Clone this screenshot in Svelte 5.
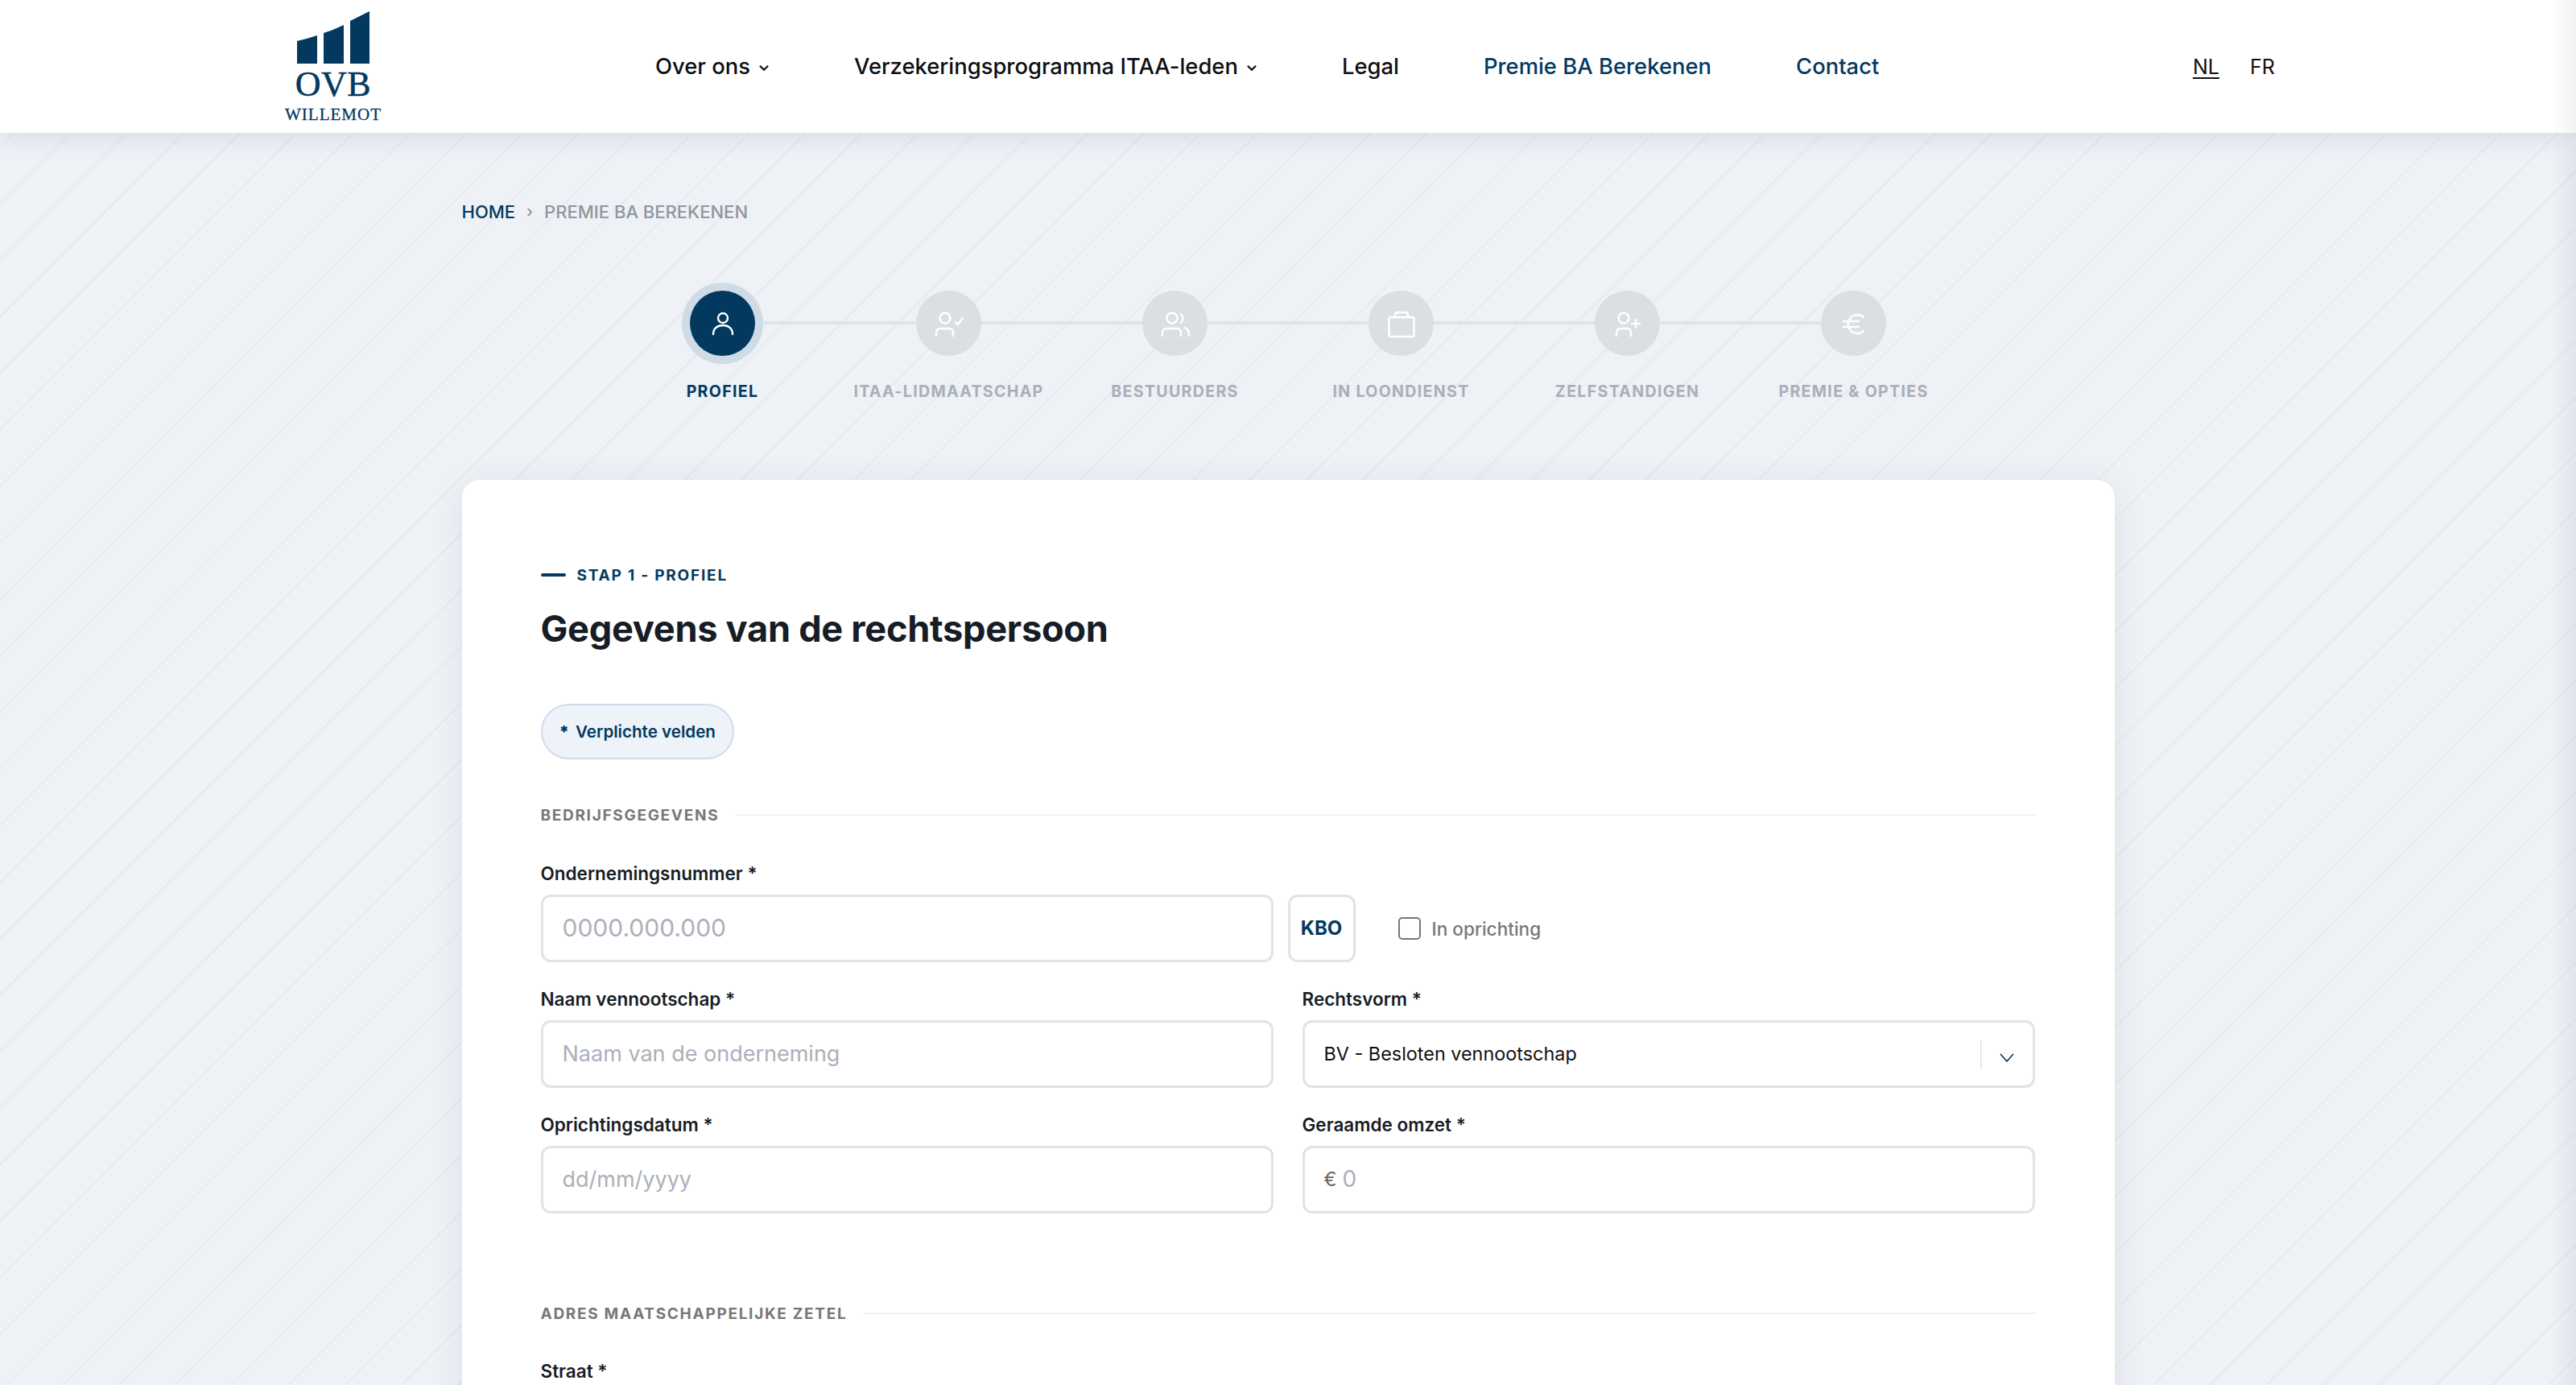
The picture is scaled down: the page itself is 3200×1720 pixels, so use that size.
<script lang="ts">
  const nav = [
    { label: 'Over ons', caret: true },
    { label: 'Verzekeringsprogramma ITAA-leden', caret: true },
    { label: 'Legal' },
    { label: 'Premie BA Berekenen', accent: true },
    { label: 'Contact', accent: true }
  ];
  const steps = [
    { key: 'user', label: 'Profiel' },
    { key: 'check', label: 'ITAA-lidmaatschap' },
    { key: 'users', label: 'Bestuurders' },
    { key: 'case', label: 'In loondienst' },
    { key: 'plus', label: 'Zelfstandigen' },
    { key: 'euro', label: 'Premie & opties' }
  ];
</script>

{#snippet caret()}
  <svg class="caret" viewBox="0 0 12 8" aria-hidden="true"><path d="M1.5 1.5 6 6l4.5-4.5" /></svg>
{/snippet}

<div class="page">
  <header class="topbar">
    <a class="logo" href="#top">
      <svg class="bars" viewBox="0 0 92 66" aria-hidden="true">
        <path d="M0 38q13-3 25-7v35H0zM33 28q13-4 25-10v48H33zM66 13q12-6 24-12v65H66z" />
      </svg>
      <span class="logo-ovb">OVB</span>
      <span class="logo-name">WILLEMOT</span>
    </a>
    <nav class="menu">
      {#each nav as item}
        <a href="#top" class:accent={item.accent}>{item.label}{#if item.caret}{@render caret()}{/if}</a>
      {/each}
    </nav>
    <div class="langs">
      <a class="current" href="#top">NL</a>
      <a href="#top">FR</a>
    </div>
  </header>

  <main class="wrap">
    <div class="crumbs">
      <a href="#top">Home</a>
      <span class="sep">›</span>
      <span>Premie BA berekenen</span>
    </div>

    <ol class="steps">
      {#each steps as step, i}
        <li class="step" class:active={i === 0}>
          <span class="dot">
            <svg viewBox="-20 -20 40 40" aria-hidden="true">
              {#if step.key === 'user'}
                <circle cx="0" cy="-7" r="6" />
                <path d="M-12 13c0-7 5-11 12-11s12 4 12 11" />
              {:else if step.key === 'check'}
                <circle cx="-5" cy="-7" r="6.5" />
                <path d="M-16 15v-4c0-3 2-5 5-5h11c3 0 5 2 5 5v4M8-2l3 3 6-8" />
              {:else if step.key === 'users'}
                <circle cx="-4" cy="-7" r="6.5" />
                <path d="M-16 15v-4c0-3 2-5 5-5h13c3 0 5 2 5 5v4M7-12c3 2 3 8 0 11M12 5c3 1 5 4 5 10" />
              {:else if step.key === 'case'}
                <rect x="-15.5" y="-8" width="31" height="24" rx="2" />
                <path d="M-8-8v-3c0-2 1-3 3-3H5c2 0 3 1 3 3v3" />
              {:else if step.key === 'plus'}
                <circle cx="-5" cy="-7" r="6.5" />
                <path d="M-14 15v-4c0-3 2-5 5-5h8c3 0 5 2 5 5v4M10-5V5M5 0h10" />
              {:else}
                <path d="M12-8a11.5 11.5 0 1 0 0 17M-13-3H6M-13 4H6" />
              {/if}
            </svg>
          </span>
          <span class="step-label">{step.label}</span>
        </li>
      {/each}
    </ol>

    <section class="card">
      <div class="eyebrow">Stap 1 - Profiel</div>
      <h1>Gegevens van de rechtspersoon</h1>
      <div class="pill"><b>*</b> Verplichte velden</div>

      <h2 class="section"><span>Bedrijfsgegevens</span></h2>

      <div class="grid">
        <div class="field wide">
          <label for="vat">Ondernemingsnummer *</label>
          <div class="vat-row">
            <input id="vat" class="input vat-input" placeholder="0000.000.000" />
            <button class="kbo" type="button">KBO</button>
            <label class="check"><input type="checkbox" /><span>In oprichting</span></label>
          </div>
        </div>
        <div class="field">
          <label for="name">Naam vennootschap *</label>
          <input id="name" class="input" placeholder="Naam van de onderneming" />
        </div>
        <div class="field">
          <label for="form">Rechtsvorm *</label>
          <div id="form" class="input select">
            <span class="value">BV - Besloten vennootschap</span>
            <span class="select-end">
              <svg viewBox="0 0 18 11" aria-hidden="true"><path d="M1 1l8 9 8-9" /></svg>
            </span>
          </div>
        </div>
        <div class="field">
          <label for="date">Oprichtingsdatum *</label>
          <input id="date" class="input" placeholder="dd/mm/yyyy" />
        </div>
        <div class="field">
          <label for="rev">Geraamde omzet *</label>
          <div class="input money">
            <span class="prefix">€</span>
            <input id="rev" placeholder="0" />
          </div>
        </div>
      </div>

      <h2 class="section address"><span>Adres maatschappelijke zetel</span></h2>
      <div class="field">
        <label for="street">Straat *</label>
        <input id="street" class="input" />
      </div>
    </section>
  </main>

  <div class="edge"></div>
</div>

<style>
  :global(body) {
    margin: 0;
    background: #eef1f6;
  }
  :global(*) { box-sizing: border-box; }

  .page {
    --navy: #03395f;
    --line: #dfe3ea;
    position: relative;
    height: 100vh;
    overflow: hidden;
    font-family: Inter, "Liberation Sans", sans-serif;
    color: #171d26;
    background-color: #eef1f6;
    background-image: repeating-linear-gradient(135deg, transparent 0 28.8px, #e4e7ec 29.8px 30.3px, transparent 31.3px 49.64px);
  }
  a { color: inherit; text-decoration: none; }

  .topbar {
    position: relative;
    z-index: 1;
    height: 165px;
    display: flex;
    align-items: center;
    padding-left: 352px;
    background: #fff;
    box-shadow: 0 0 34px rgb(20 35 60 / 0.13);
  }
  .logo {
    width: 124px;
    display: flex;
    flex-direction: column;
    align-items: center;
    color: var(--navy);
    font-family: "Liberation Serif", serif;
    line-height: 1;
  }
  .bars { width: 92px; height: 66px; margin-bottom: 4px; margin-left: 2px; fill: var(--navy); }
  .logo-ovb { font-size: 44px; letter-spacing: 0.5px; margin-bottom: 5px; -webkit-text-stroke: 0.5px var(--navy); }
  .logo-name { font-size: 21px; letter-spacing: 1px; -webkit-text-stroke: 0.3px var(--navy); }

  .menu {
    display: flex;
    gap: 105px;
    margin-left: 338px;
    margin-top: -1px;
    font-size: 27.4px;
    font-weight: 500;
    color: #0c0f14;
  }
  .menu a { display: flex; align-items: center; white-space: nowrap; }
  .menu .accent { color: var(--navy); }
  .caret {
    width: 14px;
    height: 9px;
    margin-left: 10px;
    margin-top: 4px;
    fill: none;
    stroke: currentColor;
    stroke-width: 2;
  }
  .langs {
    position: absolute;
    left: 2724px;
    display: flex;
    gap: 38px;
    font-size: 25px;
    color: #111;
  }
  .current { text-decoration: underline; text-underline-offset: 4px; }

  .wrap {
    width: 2053px;
    margin: 0 auto;
    padding-top: 84px;
  }
  .crumbs {
    display: flex;
    align-items: center;
    gap: 14px;
    height: 28px;
    font-size: 22px;
    font-weight: 500;
    text-transform: uppercase;
    color: #8f96a0;
  }
  .crumbs a { color: var(--navy); }
  .sep { font-size: 20px; }

  .steps {
    display: flex;
    justify-content: center;
    list-style: none;
    margin: 84px 0 0;
    padding: 0;
  }
  .step {
    position: relative;
    width: 281px;
    display: flex;
    flex-direction: column;
    align-items: center;
  }
  .step:not(:last-child)::after {
    content: '';
    position: absolute;
    top: 38px;
    left: 50%;
    width: 100%;
    height: 4px;
    background: #dfe3e9;
  }
  .dot {
    position: relative;
    z-index: 1;
    width: 81px;
    height: 81px;
    border-radius: 50%;
    display: grid;
    place-items: center;
    background: #dbdfe4;
  }
  .dot svg {
    width: 40px;
    height: 40px;
    fill: none;
    stroke: #fff;
    stroke-width: 2.4;
    stroke-linecap: round;
    stroke-linejoin: round;
  }
  .step-label {
    margin-top: 32px;
    height: 24px;
    font-size: 19.6px;
    line-height: 24px;
    font-weight: 700;
    letter-spacing: 1.3px;
    text-transform: uppercase;
    white-space: nowrap;
    color: #a9afba;
  }
  .active .dot {
    background: var(--navy);
    box-shadow: 0 0 0 10px #d0dce5;
  }
  .active .step-label { color: var(--navy); }

  .card {
    margin-top: 98px;
    padding: 98px 99px 60px 98px;
    background: #fff;
    border-radius: 22px;
    box-shadow: 0 4px 44px rgb(20 35 60 / 0.07);
  }
  .eyebrow {
    display: flex;
    align-items: center;
    gap: 14px;
    height: 24px;
    font-size: 19px;
    font-weight: 700;
    letter-spacing: 1.8px;
    text-transform: uppercase;
    color: var(--navy);
    margin-top: 8px;
  }
  .eyebrow::before {
    content: '';
    width: 31px;
    height: 4px;
    background: var(--navy);
    border-radius: 2px;
  }
  h1 {
    margin: 25px 0 0;
    font-size: 45.2px;
    line-height: 60px;
    font-weight: 700;
    letter-spacing: -0.3px;
  }
  .pill {
    display: inline-flex;
    align-items: center;
    gap: 8px;
    height: 69px;
    margin-top: 63px;
    padding: 0 21px;
    border: 2px solid #cfdcee;
    border-radius: 35px;
    background: #eef3fa;
    color: var(--navy);
    font-size: 20.6px;
    font-weight: 600;
  }
  .section {
    display: flex;
    align-items: center;
    gap: 20px;
    height: 24px;
    margin: 57px -2px 0 0;
    font-size: 19px;
    font-weight: 700;
    letter-spacing: 1.7px;
    text-transform: uppercase;
    color: #777;
  }
  .section::after {
    content: '';
    flex: 1;
    height: 2px;
    background: #eef0f3;
  }
  .section.address { margin-top: 112px; }

  .grid {
    display: grid;
    grid-template-columns: 1fr 1fr;
    gap: 31px 36px;
    margin-top: 46px;
  }
  .wide { grid-column: 1 / -1; }
  .field > label {
    display: block;
    height: 29px;
    margin-bottom: 12px;
    font-size: 22.5px;
    line-height: 29px;
    font-weight: 600;
  }
  .section.address + .field { margin-top: 45px; }
  .input {
    display: block;
    width: 100%;
    height: 84px;
    padding: 0 24px 2px;
    border: 3px solid var(--line);
    border-radius: 12px;
    background: #fff;
    font: 400 27px Inter, "Liberation Sans", sans-serif;
    color: #111;
    outline: none;
  }
  input::placeholder { color: #aab0ba; opacity: 1; }

  .vat-row { display: flex; align-items: center; }
  .vat-input { width: 910px; flex: none; font-size: 30px; }
  .kbo {
    width: 84px;
    height: 84px;
    margin-left: 18px;
    padding: 0 0 2px;
    border: 3px solid var(--line);
    border-radius: 12px;
    background: #fff;
    font: 700 24px Inter, "Liberation Sans", sans-serif;
    color: var(--navy);
  }
  .check {
    display: flex;
    align-items: center;
    gap: 14px;
    margin-left: 53px;
    font-size: 22.6px;
    font-weight: 500;
    color: #777;
  }
  .check input {
    appearance: none;
    width: 28px;
    height: 28px;
    margin: 0;
    border: 2px solid #777;
    border-radius: 5px;
    background: #fff;
  }

  .select {
    display: flex;
    align-items: center;
    justify-content: space-between;
    padding-right: 0;
    font-size: 23.4px;
    font-weight: 400;
  }
  .select-end {
    display: flex;
    align-items: center;
    justify-content: center;
    width: 65px;
    height: 36px;
    border-left: 2px solid #e6e8ec;
    margin-top: 4px;
  }
  .select-end svg {
    width: 18px;
    height: 11px;
    margin-top: 6px;
    fill: none;
    stroke: var(--navy);
    stroke-width: 1.6;
  }
  .money { display: flex; align-items: center; gap: 7px; }
  .prefix { font-size: 24px; color: #666; }
  .money input {
    flex: 1;
    min-width: 0;
    border: 0;
    padding: 0;
    outline: none;
    font: 400 28px Inter, "Liberation Sans", sans-serif;
  }

  .edge {
    position: absolute;
    z-index: 2;
    top: 0;
    right: 0;
    bottom: 0;
    width: 30px;
    background: linear-gradient(90deg, transparent, rgb(20 35 60 / 0.06));
  }
</style>
